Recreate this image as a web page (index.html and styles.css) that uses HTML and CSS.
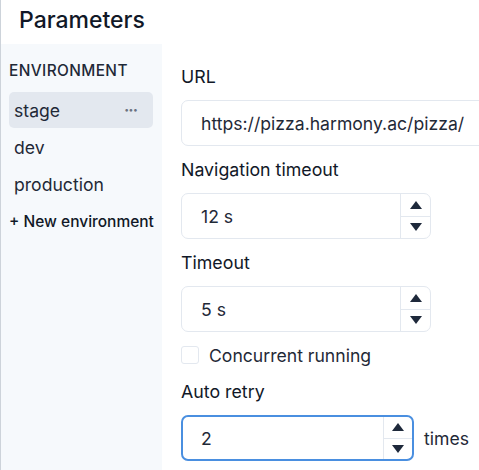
FILE: index.html
```html
<!DOCTYPE html>
<html>
<head>
<meta charset="utf-8">
<link rel="stylesheet" href="styles.css">
</head>
<body>
<div class="frame">
  <header class="header">Parameters</header>
  <div class="main">
    <aside class="sidebar">
      <div class="side-title">ENVIRONMENT</div>
      <div class="env active"><span>stage</span><span class="dots">&middot;&middot;&middot;</span></div>
      <div class="env"><span>dev</span></div>
      <div class="env"><span>production</span></div>
      <div class="env new">+ New environment</div>
    </aside>
    <section class="content">
      <div class="label">URL</div>
      <div class="input wide"><span>https://pizza.harmony.ac/pizza/</span></div>

      <div class="label">Navigation timeout</div>
      <div class="input num"><span class="val">12 s</span>
        <div class="spin"><div class="up"><i class="tri-up"></i></div><div class="down"><i class="tri-down"></i></div></div>
      </div>

      <div class="label">Timeout</div>
      <div class="input num"><span class="val">5 s</span>
        <div class="spin"><div class="up"><i class="tri-up"></i></div><div class="down"><i class="tri-down"></i></div></div>
      </div>

      <div class="check-row"><span class="box"></span><span>Concurrent running</span></div>

      <div class="label retry">Auto retry</div>
      <div class="retry-row">
        <div class="input num focus"><span class="val">2</span>
          <div class="spin"><div class="up"><i class="tri-up"></i></div><div class="down"><i class="tri-down"></i></div></div>
        </div>
        <span class="unit">times</span>
      </div>
    </section>
  </div>
</div>
</body>
</html>
```

FILE: styles.css
```css
* { box-sizing: border-box; }
html, body { margin: 0; padding: 0; }
body {
  width: 479px;
  height: 470px;
  overflow: hidden;
  background: #fff;
  font-family: Inter, "Noto Sans", sans-serif;
  color: #111827;
}
.frame {
  border-left: 1px solid #cdd3da;
  height: 470px;
  display: flex;
  flex-direction: column;
}
.header {
  height: 44px;
  padding-left: 18px;
  font-size: 23px;
  font-weight: 500;
  line-height: 40px;
  color: #111827;
}
.main {
  flex: 1;
  display: flex;
}
.sidebar {
  width: 161px;
  flex: none;
  background: #f6f9fc;
  padding: 17px 9px 0 8px;
}
.side-title {
  font-size: 15.4px;
  font-weight: 500;
  letter-spacing: 0.4px;
  line-height: 20px;
  margin-bottom: 11px;
  color: #1f2937;
}
.env {
  height: 37px;
  display: flex;
  align-items: center;
  justify-content: space-between;
  padding: 0 16px 0 5px;
  font-size: 17.6px;
  color: #1f2937;
  border-radius: 5px;
  white-space: nowrap;
}
.env.active {
  background: #e3e8ef;
  height: 36px;
  margin-bottom: 1px;
}
.dots {
  color: #6b7280;
  font-size: 16px;
  letter-spacing: -1px;
  font-weight: 700;
}
.env.new {
  padding-left: 0;
  font-size: 15.5px;
  font-weight: 500;
  color: #111827;
}
.content {
  flex: 1;
  padding: 9px 0 0 19px;
  min-width: 0;
}
.label {
  font-size: 17.8px;
  line-height: 24px;
  margin: 12px 0 11px;
  font-weight: 400;
  white-space: nowrap;
  color: #111827;
}
.input {
  height: 46px;
  border: 1px solid #e3e8ef;
  border-radius: 7px;
  display: flex;
  align-items: center;
  font-size: 17.6px;
  color: #1f2937;
  background: #fff;
}
.input.wide {
  width: 320px;
  padding-left: 19px;
  white-space: nowrap;
}
.input.num {
  width: 250px;
  padding-left: 19px;
}
.val { flex: 1; }
.spin {
  width: 30px;
  height: 100%;
  border-left: 1px solid #e3e8ef;
  display: flex;
  flex-direction: column;
}
.spin .up, .spin .down {
  flex: 1;
  display: flex;
  align-items: center;
  justify-content: center;
}
.spin .up { border-bottom: 1px solid #e3e8ef; }
.tri-up {
  width: 0; height: 0;
  border-left: 6px solid transparent;
  border-right: 6px solid transparent;
  border-bottom: 8px solid #1e293b;
}
.tri-down {
  width: 0; height: 0;
  border-left: 6px solid transparent;
  border-right: 6px solid transparent;
  border-top: 8px solid #1e293b;
}
.check-row {
  display: flex;
  align-items: center;
  height: 24px;
  margin-top: 11px;
  font-size: 17.6px;
  color: #1f2937;
}
.box {
  width: 18px;
  height: 18px;
  border: 1px solid #e3e8ef;
  border-radius: 3px;
  margin-right: 10px;
  background: #fff;
}
.label.retry { margin-top: 13px; }
.retry-row {
  display: flex;
  align-items: center;
}
.input.focus {
  width: 233px;
  border: 2px solid #4a8fe0;
  padding-left: 18px;
}
.input.focus .spin { width: 29px; }
.unit {
  margin-left: 10px;
  font-size: 17.6px;
  color: #1f2937;
}
```
